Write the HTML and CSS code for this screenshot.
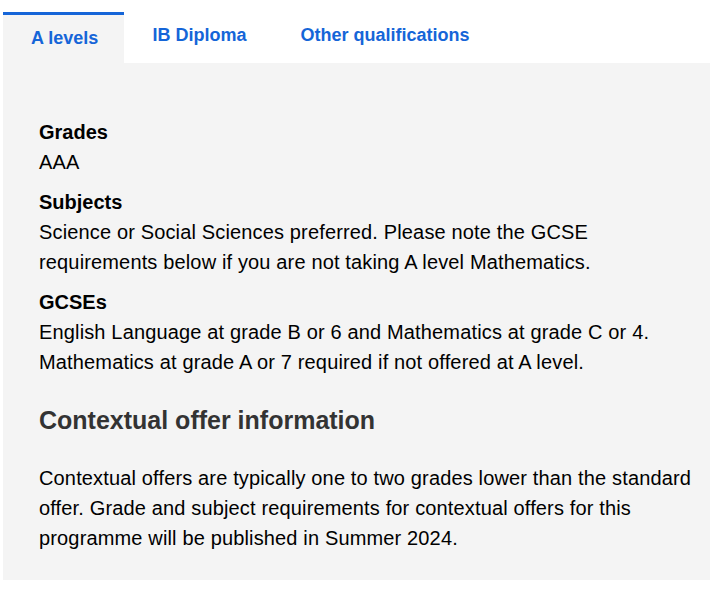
FILE: index.html
```html
<!DOCTYPE html>
<html lang="en">
<head>
<meta charset="utf-8">
<title>Entry requirements</title>
<link rel="stylesheet" href="styles.css">
</head>
<body>
<div class="tabs">
  <ul class="tab-list">
    <li class="tab tab-active">A levels</li>
    <li class="tab">IB Diploma</li>
    <li class="tab">Other qualifications</li>
  </ul>
  <div class="panel">
    <div class="req">
      <h4 class="req-title">Grades</h4>
      <p class="req-text">AAA</p>
    </div>
    <div class="req">
      <h4 class="req-title">Subjects</h4>
      <p class="req-text">Science or Social Sciences preferred. Please note the GCSE requirements below if you are not taking A level Mathematics.</p>
    </div>
    <div class="req">
      <h4 class="req-title">GCSEs</h4>
      <p class="req-text">English Language at grade B or 6 and Mathematics at grade C or 4. Mathematics at grade A or 7 required if not offered at A level.</p>
    </div>
    <h3 class="ctx-title">Contextual offer information</h3>
    <p class="ctx-text">Contextual offers are typically one to two grades lower than the standard offer. Grade and subject requirements for contextual offers for this programme will be published in Summer 2024.</p>
  </div>
</div>
</body>
</html>
```
FILE: styles.css
```css
html, body {
  margin: 0;
  padding: 0;
  background: #ffffff;
}
body {
  font-family: "Liberation Sans", Arial, sans-serif;
  color: #000;
}
.tabs {
  margin: 12px 0 0 3px;
  width: 707px;
}
.tab-list {
  list-style: none;
  margin: 0;
  padding: 0;
  display: flex;
  height: 51px;
}
.tab {
  font-size: 18px;
  font-weight: bold;
  line-height: 22px;
  color: #1565d8;
  padding: 12px 26px 0 28px;
}
.tab-active {
  background: #f4f4f4;
  border-top: 3px solid #1565d8;
}
.panel {
  background: #f4f4f4;
  padding: 54px 10px 27px 36px;
}
.req + .req {
  margin-top: 10px;
}
.req-title {
  margin: 0;
  font-size: 20px;
  font-weight: bold;
  line-height: 30px;
}
.req-text {
  margin: 0;
  font-size: 20px;
  line-height: 30px;
  letter-spacing: 0.15px;
}
.ctx-title {
  margin: 28px 0 0 0;
  font-size: 25px;
  line-height: 30px;
  font-weight: bold;
  color: #333333;
}
.ctx-text {
  margin: 28px 0 0 0;
  font-size: 20px;
  line-height: 30px;
  letter-spacing: 0.15px;
  color: #000;
}
```
